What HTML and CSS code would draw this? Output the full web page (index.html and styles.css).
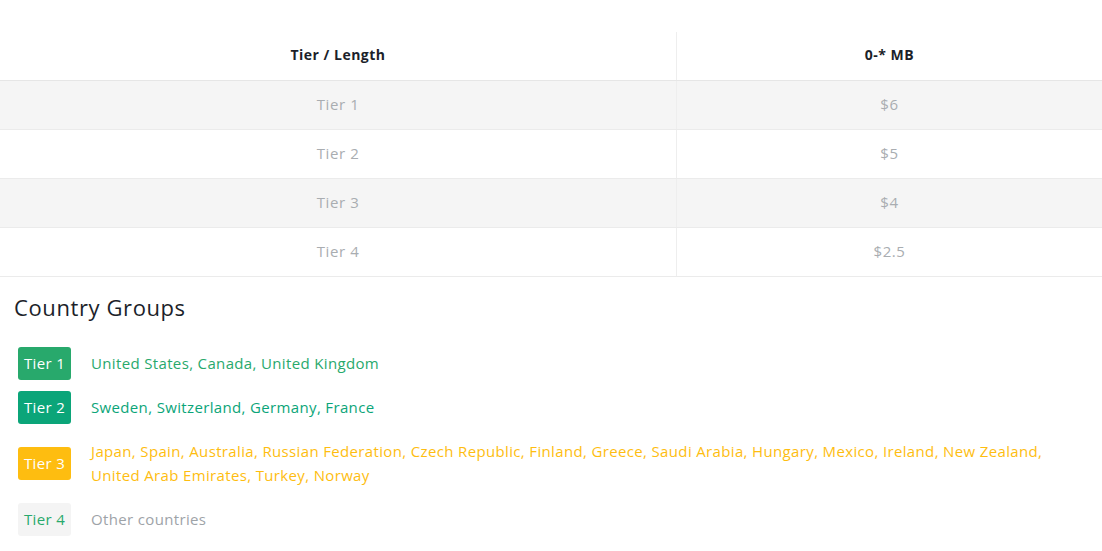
FILE: index.html
```html
<!DOCTYPE html>
<html>
<head>
<meta charset="utf-8">
<link rel="stylesheet" href="styles.css">
</head>
<body>
<div class="page">
  <table class="prices">
    <thead>
      <tr><th class="col1">Tier / Length</th><th>0-* MB</th></tr>
    </thead>
    <tbody>
      <tr><td class="col1">Tier 1</td><td>$6</td></tr>
      <tr><td class="col1">Tier 2</td><td>$5</td></tr>
      <tr><td class="col1">Tier 3</td><td>$4</td></tr>
      <tr><td class="col1">Tier 4</td><td>$2.5</td></tr>
    </tbody>
  </table>
  <h2 class="title">Country Groups</h2>
  <div class="groups">
    <div class="group t1"><span class="badge">Tier 1</span><span class="countries">United States, Canada, United Kingdom</span></div>
    <div class="group t2"><span class="badge">Tier 2</span><span class="countries">Sweden, Switzerland, Germany, France</span></div>
    <div class="group t3"><span class="badge">Tier 3</span><span class="countries">Japan, Spain, Australia, Russian Federation, Czech Republic, Finland, Greece, Saudi Arabia, Hungary, Mexico, Ireland, New Zealand, United Arab Emirates, Turkey, Norway</span></div>
    <div class="group t4"><span class="badge">Tier 4</span><span class="countries">Other countries</span></div>
  </div>
</div>
</body>
</html>
```

FILE: styles.css
```css
html, body {
  margin: 0;
  padding: 0;
  background: #ffffff;
}
body {
  font-family: "Open Sans", "Noto Sans", sans-serif;
  letter-spacing: 0.35px;
}
.page {
  padding-top: 32px;
}
.prices {
  width: 100%;
  border-collapse: collapse;
  font-size: 15px;
}
.prices th {
  height: 45px;
  padding: 0 0 3px;
  font-weight: 700;
  font-size: 14px;
  letter-spacing: 0.5px;
  color: #1c1f2a;
  text-align: center;
  border-bottom: 1px solid #e6e6e6;
}
.prices td {
  height: 46px;
  padding: 0 0 2px;
  text-align: center;
  color: #a9adb1;
  letter-spacing: 0.6px;
  border-bottom: 1px solid #ebebeb;
}
.prices .col1 {
  width: 676px;
  border-right: 1px solid #eeeeee;
}
.prices tbody tr:nth-child(odd) td {
  background: #f5f5f5;
}
.title {
  margin: 15px 0 0 14px;
  font-weight: 400;
  font-size: 22px;
  line-height: 30px;
  letter-spacing: 0.6px;
  color: #1c1f2a;
}
.groups {
  margin-top: 19px;
  padding: 0 18px;
}
.group {
  display: flex;
  align-items: center;
  padding: 10px 0;
  font-size: 15px;
  line-height: 24px;
}
.badge {
  flex: none;
  width: 53px;
  height: 33px;
  margin: -4.5px 0;
  border-radius: 3px;
  display: flex;
  align-items: center;
  justify-content: center;
  color: #ffffff;
}
.countries {
  margin-left: 20px;
  max-width: 975px;
}
.t1 .badge { background: #28a96c; }
.t1 .countries { color: #28a96c; }
.t2 .badge { background: #0ba579; }
.t2 .countries { color: #0ba579; }
.t3 .badge { background: #febd10; }
.t3 .countries { color: #febd10; }
.t4 .badge { background: #f4f4f4; color: #28a96c; }
.t4 .countries { color: #9ea3a8; }
```
